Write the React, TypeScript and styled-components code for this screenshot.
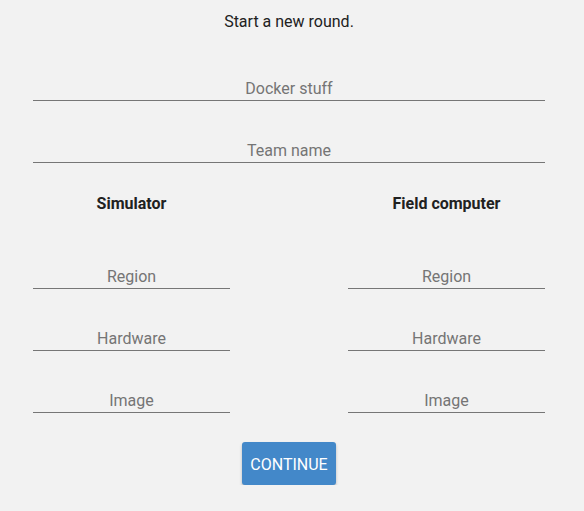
import styled, { createGlobalStyle } from 'styled-components'

const GlobalStyle = createGlobalStyle`
  body {
    margin: 0;
    background: #f2f2f2;
    font-family: Roboto, "Liberation Sans", sans-serif;
  }
`

const Page = styled.div`
  width: 512px;
  padding: 12px 0 0 33px;
  display: flex;
  flex-direction: column;
`

const Title = styled.div`
  font-size: 16px;
  line-height: 20px;
  color: #212121;
  text-align: center;
  margin-bottom: 44px;
`

const Field = styled.input`
  display: block;
  width: 100%;
  box-sizing: border-box;
  height: 25px;
  padding: 0;
  margin: 0 0 37px;
  border: none;
  border-bottom: 1px solid #767676;
  background: transparent;
  font-family: Roboto, "Liberation Sans", sans-serif;
  font-size: 16px;
  text-align: center;
  color: #212121;
  outline: none;

  &::placeholder {
    color: #757575;
    opacity: 1;
  }
`

const Columns = styled.div`
  display: grid;
  grid-template-columns: 197px 197px;
  justify-content: space-between;
  margin-top: -6px;
`

const Column = styled.div`
  display: flex;
  flex-direction: column;
`

const Heading = styled.div`
  font-size: 16px;
  line-height: 20px;
  font-weight: 700;
  color: #212121;
  text-align: center;
  margin-bottom: 50px;
`

const Actions = styled.div`
  display: flex;
  justify-content: center;
  margin-top: -8px;
`

const Button = styled.button`
  width: 94px;
  height: 43px;
  padding: 1px 0 0;
  border: none;
  border-radius: 3px;
  background: #4388c9;
  color: #fff;
  font-family: Roboto, "Liberation Sans", sans-serif;
  font-size: 16px;
  text-transform: uppercase;
  box-shadow: 0 2px 3px rgba(0, 0, 0, 0.25);
  cursor: pointer;
`

const MachineColumn = ({ title }: { title: string }) => (
  <Column>
    <Heading>{title}</Heading>
    <Field placeholder="Region" />
    <Field placeholder="Hardware" />
    <Field placeholder="Image" />
  </Column>
)

const App = () => {
  return (
    <>
      <GlobalStyle />
      <Page>
        <Title>Start a new round.</Title>
        <Field placeholder="Docker stuff" />
        <Field placeholder="Team name" />
        <Columns>
          <MachineColumn title="Simulator" />
          <MachineColumn title="Field computer" />
        </Columns>
        <Actions>
          <Button>Continue</Button>
        </Actions>
      </Page>
    </>
  )
}

export default App
